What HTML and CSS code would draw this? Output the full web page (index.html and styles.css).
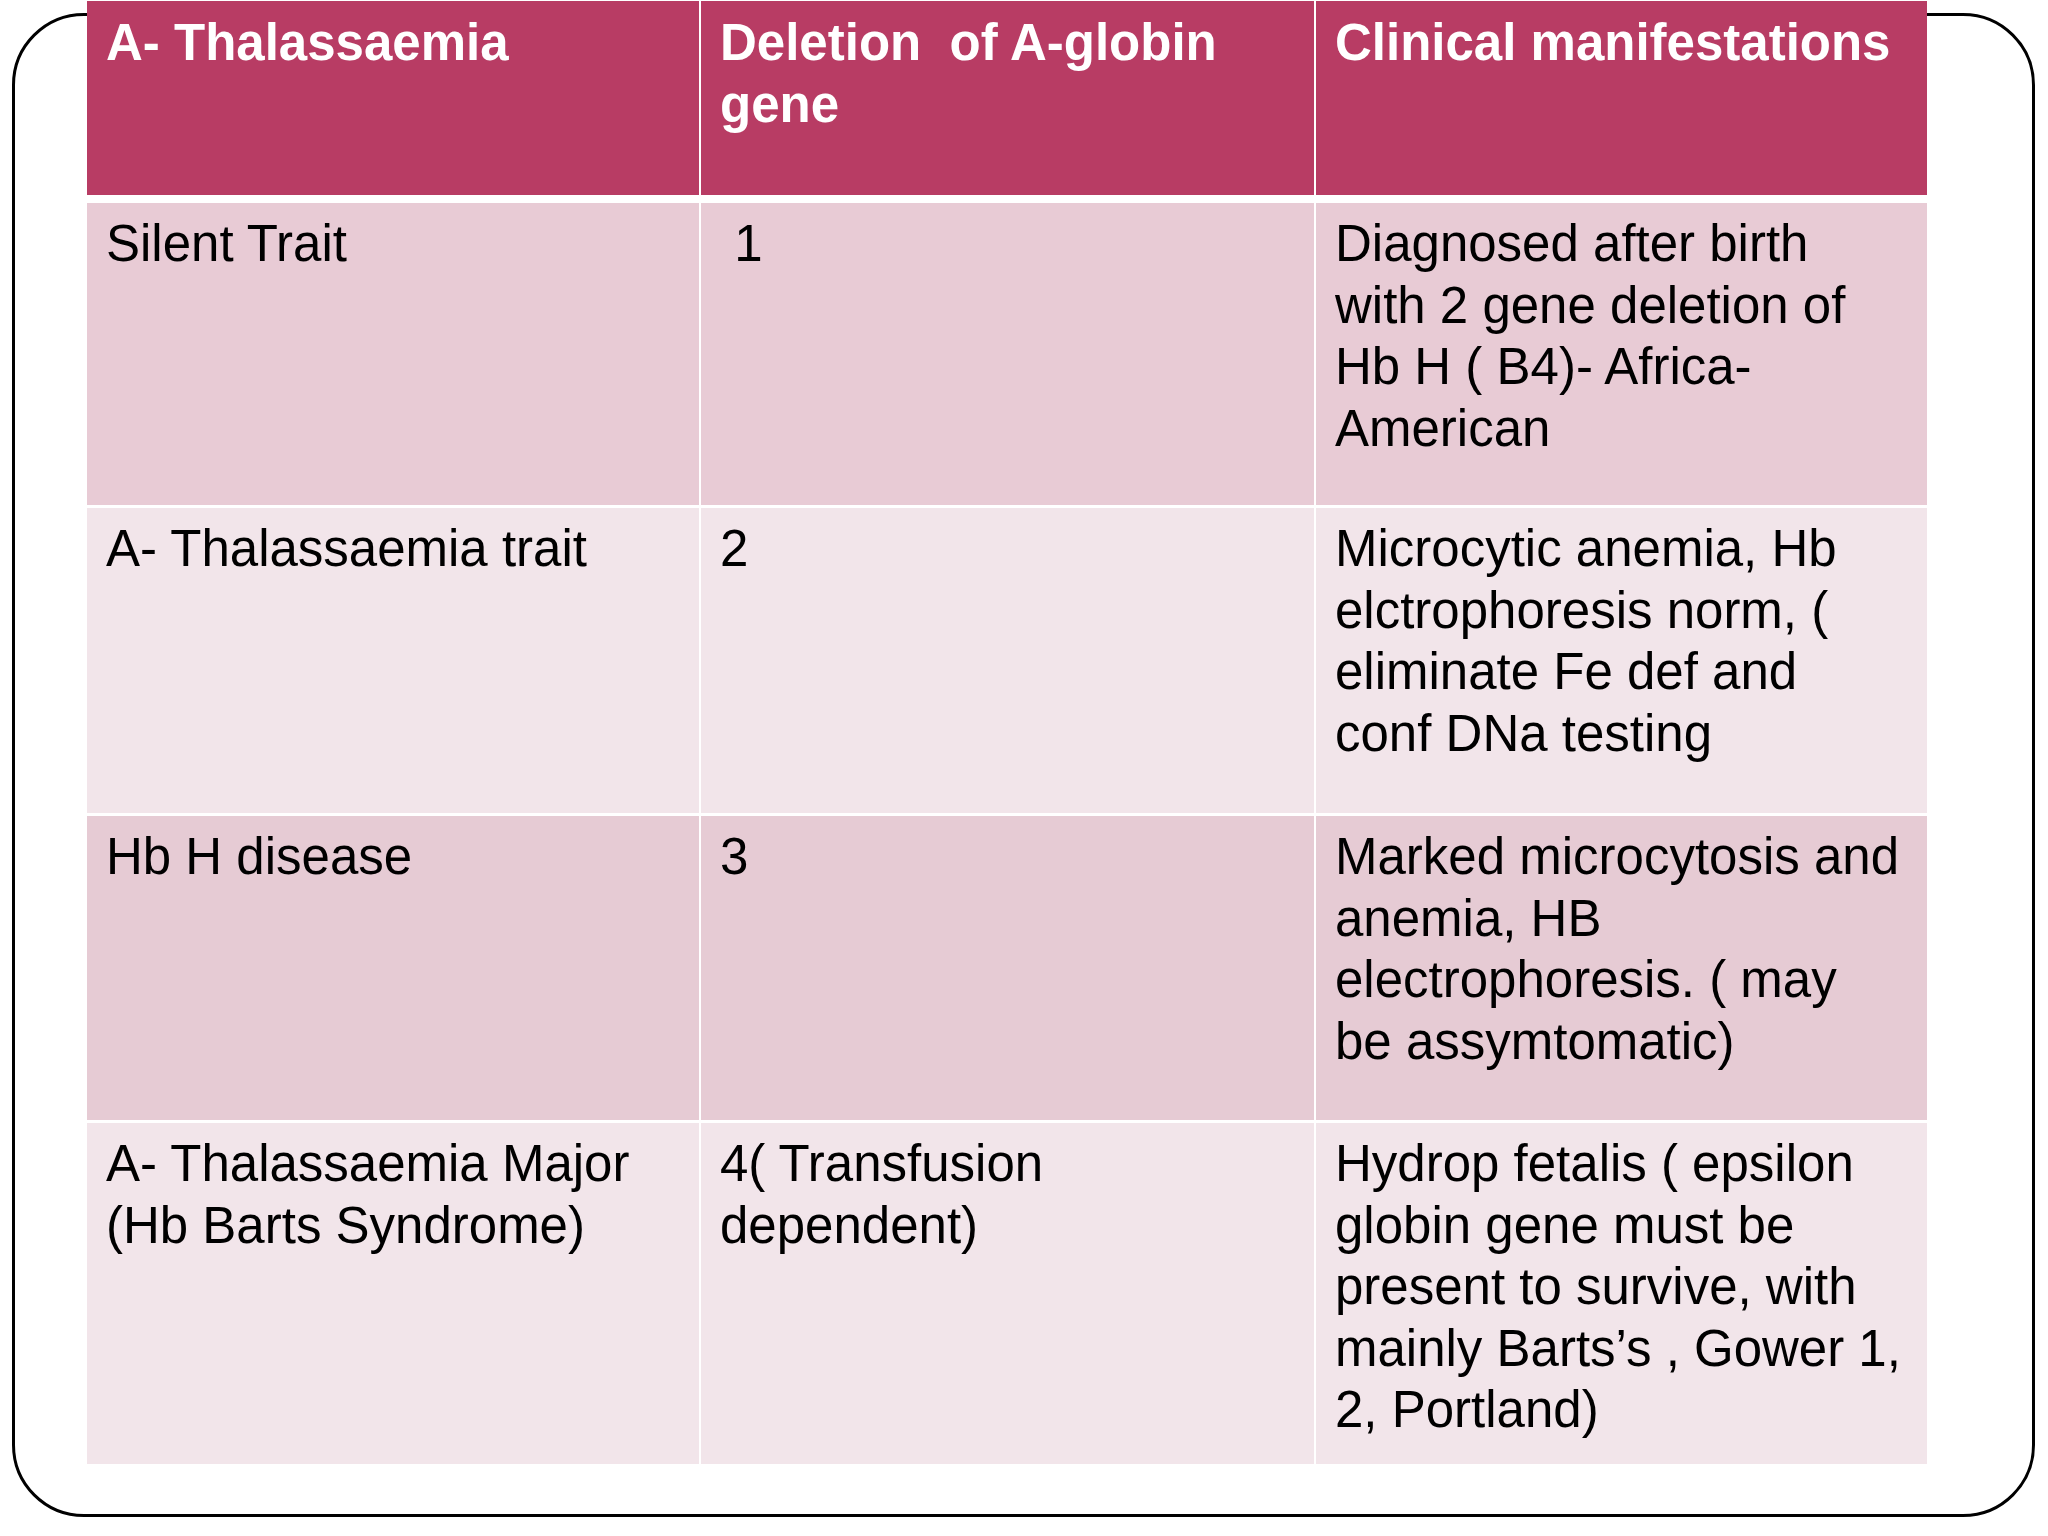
FILE: index.html
```html
<!DOCTYPE html>
<html lang="en">
<head>
<meta charset="utf-8">
<title>A- Thalassaemia</title>
<link rel="stylesheet" href="styles.css">
</head>
<body>
<div class="slide">
  <div class="frame">
    <div class="table">
      <div class="cell head">A- Thalassaemia</div>
      <div class="cell head">Deletion&nbsp; of A-globin<br>gene</div>
      <div class="cell head">Clinical manifestations</div>

      <div class="cell odd">Silent Trait</div>
      <div class="cell odd">&nbsp;1</div>
      <div class="cell odd">Diagnosed after birth<br>with 2 gene deletion of<br>Hb H ( B4)- Africa-<br>American</div>

      <div class="cell even">A- Thalassaemia trait</div>
      <div class="cell even">2</div>
      <div class="cell even">Microcytic anemia, Hb<br>elctrophoresis norm, (<br>eliminate Fe def and<br>conf DNa testing</div>

      <div class="cell odd alt">Hb H disease</div>
      <div class="cell odd alt">3</div>
      <div class="cell odd alt">Marked microcytosis and<br>anemia, HB<br>electrophoresis. ( may<br>be assymtomatic)</div>

      <div class="cell even">A- Thalassaemia Major<br>(Hb Barts Syndrome)</div>
      <div class="cell even">4( Transfusion<br>dependent)</div>
      <div class="cell even">Hydrop fetalis ( epsilon<br>globin gene must be<br>present to survive, with<br>mainly Barts’s , Gower 1,<br>2, Portland)</div>
    </div>
  </div>
</div>
</body>
</html>
```
FILE: styles.css
```css
html, body {
  margin: 0;
  padding: 0;
  background: #ffffff;
}

body {
  font-family: "Liberation Sans", Arial, sans-serif;
}

.slide {
  width: 2048px;
  height: 1536px;
  box-sizing: border-box;
  padding: 13px 0 0 12px;
  overflow: hidden;
  background: #ffffff;
}

.frame {
  width: 2023px;
  height: 1504px;
  box-sizing: border-box;
  border: 3px solid #000000;
  border-radius: 72px;
  padding-left: 72px;
}

.table {
  width: 1840px;
  margin-top: -15px;
  display: grid;
  grid-template-columns: 612px 613px 611px;
  grid-template-rows: 199px 302px 305px 304px 341px;
  column-gap: 2px;
  row-gap: 3px;
  background: #ffffff;
}

.cell {
  box-sizing: border-box;
  padding: 10px 4px 0 19px;
  font-size: 51px;
  line-height: 61.5px;
  color: #000000;
  white-space: nowrap;
}

.head {
  background: #b83c64;
  color: #ffffff;
  font-weight: bold;
  padding-top: 11px;
  margin-bottom: 5px;
}

.odd {
  background: #e8cbd5;
}

.alt {
  background: #e6cbd4;
}

.even {
  background: #f2e5ea;
}
```
